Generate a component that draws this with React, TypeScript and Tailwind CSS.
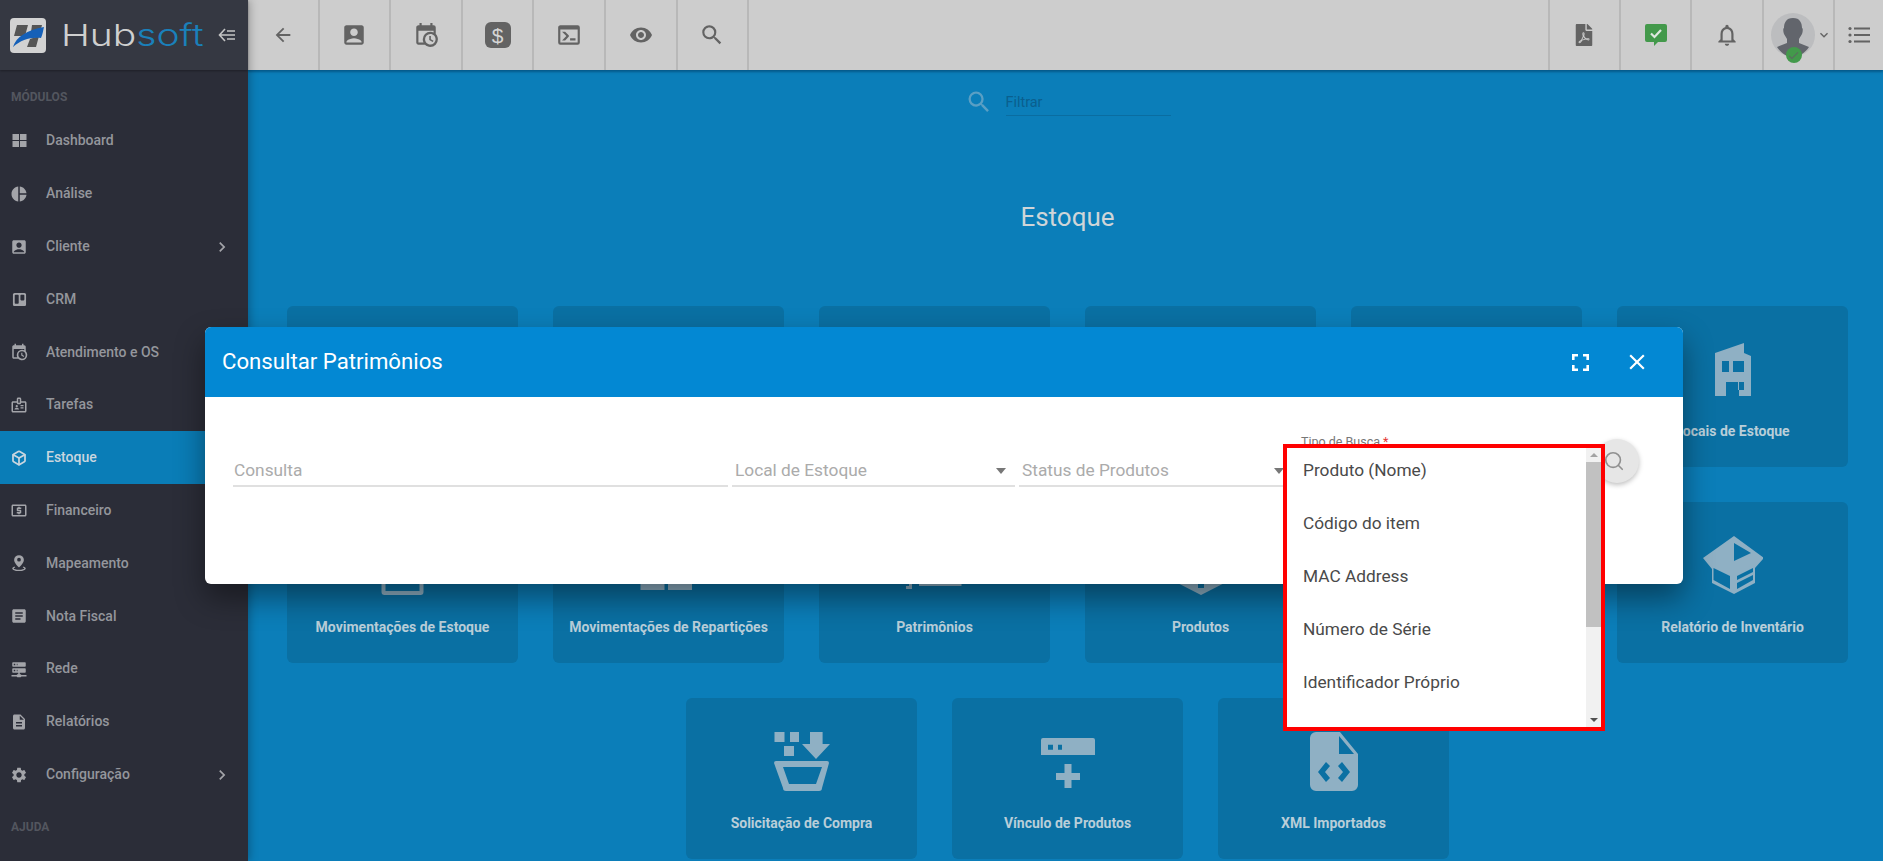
import React from "react";
import { Box, Search } from "lucide-react";
import {
  MdAccountBox, MdPieChart, MdOutlineBadge, MdLocalAtm, MdArticle, MdDescription,
  MdSettings, MdVisibility, MdSearch, MdNotificationsNone, MdArrowBack, MdChevronRight,
  MdKeyboardArrowDown, MdClose, MdCheck,
} from "react-icons/md";
import { FaFilePdf, FaTrello } from "react-icons/fa";

const CAL = "M15,13H16.5V15.82L18.94,17.23L18.19,18.53L15,16.69V13M19,8H5V19H9.67C9.24,18.09 9,17.07 9,16A7,7 0 0,1 16,9C17.07,9 18.09,9.24 19,9.67V8M5,21C3.89,21 3,20.1 3,19V5C3,3.89 3.89,3 5,3H6V1H8V3H16V1H18V3H19A2,2 0 0,1 21,5V11.1C22.24,12.36 23,14.09 23,16A7,7 0 0,1 16,23C14.09,23 12.36,22.24 11.1,21H5M16,11.15A4.85,4.85 0 0,0 11.15,16C11.15,18.68 13.32,20.85 16,20.85A4.85,4.85 0 0,0 20.85,16C20.85,13.32 18.68,11.15 16,11.15Z";
const SERVER = "M13,19H14A1,1 0 0,1 15,20H22V22H15A1,1 0 0,1 14,23H10A1,1 0 0,1 9,22H2V20H9A1,1 0 0,1 10,19H11V17H4A1,1 0 0,1 3,16V12A1,1 0 0,1 4,11H20A1,1 0 0,1 21,12V16A1,1 0 0,1 20,17H13V19M4,3H20A1,1 0 0,1 21,4V8A1,1 0 0,1 20,9H4A1,1 0 0,1 3,8V4A1,1 0 0,1 4,3M9,7H10V5H9V7M9,15H10V13H9V15M5,5V7H7V5H5M5,13V15H7V13H5Z";
const CONSOLE = "M20,19V7H4V19H20M20,3A2,2 0 0,1 22,5V19A2,2 0 0,1 20,21H4A2,2 0 0,1 2,19V5C2,3.89 2.9,3 4,3H20M13,17V15H18V17H13M9.58,13L5.57,9H8.4L11.7,12.3C12.09,12.69 12.09,13.33 11.7,13.72L8.42,17H5.59L9.58,13Z";
const PIN = "M12 1.500a6.500 6.500 0 0 0-6.500 6.500C5.500 12.500 12 18 12 18s6.500-5.500 6.500-10A6.500 6.500 0 0 0 12 1.500zm0 3.500a2.500 2.500 0 1 1 0 5 2.500 2.500 0 0 1 0-5zM6 16.500c-2 .7-3 1.700-3 2.700C3 21 7 22.800 12 22.800S21 21 21 19.200c0-1-1-2-3-2.700l-1 1.500c1.300.4 2 .9 2 1.200 0 .6-3 1.700-7 1.700s-7-1.100-7-1.700c0-.3.7-.8 2-1.200z";

const P = ({ d, size, className }: { d: string; size: number; className?: string }) => (
  <svg width={size} height={size} viewBox="0 0 24 24" fill="currentColor" className={className}><path d={d} /></svg>
);

const Tiles = () => (
  <svg width="15" height="15" viewBox="0 0 15 15" fill="currentColor">
    <rect x="0.5" y="1" width="6.5" height="6" /><rect x="8" y="1" width="6.5" height="6" />
    <rect x="0.5" y="8" width="6.5" height="6" /><rect x="8" y="8" width="6.5" height="6" />
  </svg>
);

const sideItems: { label: string; icon: React.ReactNode; arrow?: boolean; active?: boolean }[] = [
  { label: "Dashboard", icon: <Tiles /> },
  { label: "Análise", icon: <MdPieChart size={18} /> },
  { label: "Cliente", icon: <MdAccountBox size={18} />, arrow: true },
  { label: "CRM", icon: <FaTrello size={15} /> },
  { label: "Atendimento e OS", icon: <P d={CAL} size={18} /> },
  { label: "Tarefas", icon: <MdOutlineBadge size={18} /> },
  { label: "Estoque", icon: <Box size={16} strokeWidth={2.6} />, active: true },
  { label: "Financeiro", icon: <MdLocalAtm size={19} /> },
  { label: "Mapeamento", icon: <P d={PIN} size={18} /> },
  { label: "Nota Fiscal", icon: <MdArticle size={18} /> },
  { label: "Rede", icon: <P d={SERVER} size={18} /> },
  { label: "Relatórios", icon: <MdDescription size={18} /> },
  { label: "Configuração", icon: <MdSettings size={18} />, arrow: true },
];

const Sidebar = () => (
  <aside className="relative z-20 flex h-full w-[248px] shrink-0 flex-col bg-[#2b2d38] shadow-[2px_0_8px_rgba(0,0,0,0.25)]">
    <div className="flex h-[70px] shrink-0 items-center bg-[#353842] pl-[10px] shadow-[0_1px_2px_rgba(0,0,0,0.3)]">
      <svg width="36" height="35" viewBox="0 0 36 35" className="shrink-0">
        <rect width="36" height="35" rx="4" fill="#d2d2d2" />
        <path d="M7 7h11l-3 11H4zM22 7h10l-1 4-10 3zM20 21l9-3-3 11h-9z" fill="#555" />
        <path d="M3 29C6 19 17 12 34 9c-1 4-1.500 8-3 11-11-1-20 2-28 9z" fill="#1560b8" />
      </svg>
      <div className="ml-[15px] w-[147px] origin-left scale-x-[1.3] whitespace-nowrap text-[30px] font-light leading-none text-[#cfcfcf] [font-family:Inter,sans-serif]">
        Hub<span className="text-[#1a80ba]">soft</span>
      </div>
      <svg width="18" height="14" viewBox="0 0 18 14" fill="none" stroke="#c4c4c4" strokeWidth="1.6" className="ml-[10px] shrink-0">
        <path d="M7 1 1.5 7 7 13M2 7h15M9 3h8M9 11h8" />
      </svg>
    </div>
    <div className="flex h-[44.6px] shrink-0 items-end pb-[11px] pl-[11px] text-[12px] font-bold leading-[14px] text-[#53565f]">MÓDULOS</div>
    {sideItems.map((it) => (
      <div key={it.label} className={`flex h-[52.8px] shrink-0 items-center pl-[10px] text-[14px] font-medium ${it.active ? "bg-[#0a7db7] text-[#c9d6df]" : "text-[#94969c]"}`}>
        <span className={`flex w-[18px] justify-center ${it.active ? "text-[#c9d6df]" : "text-[#a3a4a9]"}`}>{it.icon}</span>
        <span className="ml-[18px] flex-1">{it.label}</span>
        {it.arrow && <MdChevronRight size={20} className="mr-[16px] text-[#a3a4a9]" />}
      </div>
    ))}
    <div className="flex h-[53px] shrink-0 items-center pl-[11px] text-[12px] font-bold text-[#53565f]">AJUDA</div>
  </aside>
);

const TopCell = ({ children }: { children: React.ReactNode }) => (
  <div className="flex h-full w-[71.6px] shrink-0 items-center justify-center border-r-2 border-[#b8b8b8] text-[#636363]">{children}</div>
);
const TopCellR = ({ children }: { children: React.ReactNode }) => (
  <div className="flex h-full w-[71.3px] shrink-0 items-center justify-center border-l-2 border-[#b8b8b8] text-[#636363]">{children}</div>
);

const TopBar = () => (
  <header className="relative z-10 flex h-[70px] shrink-0 items-stretch bg-[#cdcdcd] shadow-[0_2px_2px_rgba(0,60,100,0.55)]">
    <TopCell><MdArrowBack size={22} /></TopCell>
    <TopCell><MdAccountBox size={26} /></TopCell>
    <TopCell><P d={CAL} size={26} /></TopCell>
    <TopCell>
      <div className="flex h-[26px] w-[26px] items-center justify-center rounded-[6px] bg-[#636363] text-[21px] font-light leading-none text-[#d5d5d5] [font-family:'Liberation_Sans',sans-serif]">$</div>
    </TopCell>
    <TopCell><P d={CONSOLE} size={26} /></TopCell>
    <TopCell><MdVisibility size={24} /></TopCell>
    <TopCell><MdSearch size={26} /></TopCell>
    <div className="flex-1" />
    <TopCellR><FaFilePdf size={22} /></TopCellR>
    <TopCellR>
      <svg width="22" height="22" viewBox="0 0 22 22">
        <path d="M2 0h18a2 2 0 0 1 2 2v14a2 2 0 0 1-2 2h-7l-4 4v-4H2a2 2 0 0 1-2-2V2a2 2 0 0 1 2-2z" fill="#43994b" />
        <path d="M6 9.5 9.5 13 16 6" fill="none" stroke="#dfe8df" strokeWidth="2.2" />
      </svg>
    </TopCellR>
    <TopCellR><MdNotificationsNone size={26} /></TopCellR>
    <div className="flex h-full w-[71.3px] shrink-0 items-center border-l-2 border-[#b8b8b8] pl-[7px]">
      <div className="relative h-[44px] w-[44px] shrink-0">
        <svg width="44" height="44" viewBox="0 0 44 44">
          <circle cx="22" cy="22" r="22" fill="#bcbdbf" />
          <path d="M22 5c7 0 9 5 9 10 1 0 1 3 0 6-1 2-2 3-3 5v4l10 4c-4 6-10 10-16 10S10 40 6 34l10-4v-4c-1-2-2-3-3-5-1-3-1-6 0-6 0-5 2-10 9-10z" fill="#62656c" />
        </svg>
        <span className="absolute -bottom-[6px] left-[15px] flex h-[16px] w-[16px] items-center justify-center rounded-full bg-[#43994b] text-[#5c6a60]"><MdCheck size={13} /></span>
      </div>
      <MdKeyboardArrowDown size={16} className="ml-[1px] text-[#636363]" />
    </div>
    <div className="flex h-full w-[50px] shrink-0 items-center justify-center border-l-2 border-[#b8b8b8]">
      <svg width="22" height="18" viewBox="0 0 22 18" fill="#636363">
        <circle cx="2" cy="2.5" r="1.6" /><rect x="6" y="1.5" width="16" height="2" />
        <circle cx="2" cy="9" r="1.6" /><rect x="6" y="8" width="16" height="2" />
        <circle cx="2" cy="15.5" r="1.6" /><rect x="6" y="14.5" width="16" height="2" />
      </svg>
    </div>
  </header>
);

const IC = "#8fb0c4";
const I = ({ children }: { children: React.ReactNode }) => (
  <svg width="60" height="60" viewBox="0 0 60 60" fill={IC} fillRule="evenodd">{children}</svg>
);

const Building = () => (
  <I><path d="M12 13 41 3v10l7 3v40H36V42H23v14H12zM19 21v11h7V21zM30 21v11h11V21zM35 42h6v8h-6z" /></I>
);
const Pack = () => (
  <I><path d="M31 0 61 22 52 32V47L31 58 9 47V33L0 22ZM10.500 32 27 40V53L10.500 44ZM34 40 50 32V36L34 44ZM34 47 50 39V44L34 53ZM31 7V25L48 17Z" /></I>
);
const Move = () => (
  <I><path d="M8.500 30h42v26a3 3 0 0 1-3 3h-36a3 3 0 0 1-3-3zM12.500 30v25h34V30z" /></I>
);
const Rep = () => (
  <I><path d="M1.500 38h24v16h-24zM29 38h24v16H29z" /></I>
);
const Pat = () => (
  <I><path d="M14 40h42.500v10H14zM4 40h3v13H1v-3h3z" /></I>
);
const Prod = () => (
  <I><path d="M8.500 40h43v8L30 59 8.500 48zM27 48h6v4h-6z" /></I>
);
const Basket = () => (
  <I>
    <path d="M2.500 0h10v10h-10zM18 0h9v10h-9zM12 14h10v10H12zM38 0h12.600v12H58L44 27 30 12h8z" />
    <path d="M4 29h51a2 2 0 0 1 2 2L50 56a3 3 0 0 1-3 3H14a3 3 0 0 1-3-3L2 31a2 2 0 0 1 2-2zM11 35l6 17h27l6-17z" />
  </I>
);
const Link = () => (
  <I><path d="M5 6h50a2 2 0 0 1 2 2v15H3V8a2 2 0 0 1 2-2zM10 12.700v5h5v-5zM20 12.700v5h4v-5zM26.500 32h7v9H42v7h-8.500v8h-7v-8H18v-7h8.500z" /></I>
);
const Xml = () => (
  <I><path d="M12 0h24l18 22v31a6 6 0 0 1-6 6H12a6 6 0 0 1-6-6V6a6 6 0 0 1 6-6zM35 4v18h15zM22 30l-8 10 8 10 4-4-5-6 5-6zM38 30l-4 4 5 6-5 6 4 4 8-10z" /></I>
);

const Card = ({ icon, label }: { icon?: React.ReactNode; label?: string }) => (
  <div className="flex h-[161px] w-[231px] shrink-0 flex-col items-center rounded-[6px] bg-[#0a70a3] pt-[34px]">
    <div className="h-[60px]">{icon}</div>
    {label && <div className="mt-[23px] whitespace-nowrap text-[14px] font-bold leading-[17px] text-[#b9ced9]">{label}</div>}
  </div>
);

const Main = () => (
  <main className="flex min-h-0 flex-1 flex-col items-center overflow-hidden bg-[#0b7eb9] pl-1">
    <div className="mt-[17px] flex h-[29px] items-end">
      <MdSearch size={28} className="text-[#5a9fc4]" />
      <div className="ml-[13px] w-[165px] border-b border-[#0a6da1] pb-[2px] text-[14.4px] leading-[20px] text-[#0a5f8e]">Filtrar</div>
    </div>
    <h1 className="mt-[86px] text-[26px] font-normal leading-[30px] text-[#cfd5d8]">Estoque</h1>
    <div className="mt-[74px] flex w-[1561px] flex-wrap justify-center gap-[35px]">
      <Card /><Card /><Card /><Card /><Card />
      <Card icon={<Building />} label="Locais de Estoque" />
      <Card icon={<Move />} label="Movimentações de Estoque" />
      <Card icon={<Rep />} label="Movimentações de Repartições" />
      <Card icon={<Pat />} label="Patrimônios" />
      <Card icon={<Prod />} label="Produtos" />
      <Card />
      <Card icon={<Pack />} label="Relatório de Inventário" />
      <Card icon={<Basket />} label="Solicitação de Compra" />
      <Card icon={<Link />} label="Vínculo de Produtos" />
      <Card icon={<Xml />} label="XML Importados" />
    </div>
  </main>
);

const Field = ({ label, w, arrow, cls }: { label: string; w: string; arrow?: boolean; cls: string }) => (
  <div className={`flex h-[48px] shrink-0 items-end ${w}`}>
    <div className={`flex h-[33px] w-full items-center border-b-2 border-[#e0e0e0] pt-[3px] text-[17.3px] text-[#ababab] ${cls}`}>
      <span className="flex-1">{label}</span>
      {arrow && <span className="h-0 w-0 border-x-[5px] border-t-[6px] border-x-transparent border-t-[#777]" />}
    </div>
  </div>
);

const Modal = () => (
  <div className="absolute left-[205px] top-[327px] z-30 h-[257px] w-[1478px] rounded-[6px] bg-white shadow-[0_14px_30px_rgba(0,0,0,0.42)]">
    <div className="flex h-[70px] items-center rounded-t-[6px] bg-[#0388d3] pl-[17px] text-white">
      <div className="flex-1 pb-[1px] text-[22.2px] font-normal">Consultar Patrimônios</div>
      <svg width="17" height="17" viewBox="0 0 17 17" fill="none" stroke="#fff" strokeWidth="2.6" className="mr-[35px]">
        <path d="M1.300 6V1.300H6M11 1.300h4.700V6M15.700 11v4.700H11M6 15.700H1.300V11" />
      </svg>
      <MdClose size={26} className="mr-[33px]" />
    </div>
    <div className="flex items-start gap-[4px] pl-[28px] pt-[42px]">
      <Field label="Consulta" w="w-[495px]" cls="pl-[1px] pr-[9px]" />
      <Field label="Local de Estoque" w="w-[283px]" arrow cls="pl-[3px] pr-[9px]" />
      <Field label="Status de Produtos" w="w-[283px]" arrow cls="pl-[3px] pr-[18px]" />
      <div className="flex h-[48px] w-[291px] shrink-0 flex-col">
        <div className="-ml-[5px] -mt-[3px] text-[12.5px] leading-[12px] text-[#777]">Tipo de Busca <span className="text-[#e53935]">*</span></div>
      </div>
      <div className="-ml-[6px] flex h-[44px] w-[44px] shrink-0 items-center justify-center rounded-full bg-[#e6e6e6] pr-[6px] text-[#909090] shadow-[0_2px_5px_rgba(0,0,0,0.25)]">
        <Search size={22} strokeWidth={1.8} />
      </div>
    </div>
    <div className="absolute left-[1078px] top-[117px] flex h-[287px] w-[322px] overflow-hidden border-4 border-[#ff0000] bg-white">
      <div className="-mt-[3px] flex-1 pl-[16px] text-[17.3px] text-[#4a4a4a]">
        {["Produto (Nome)", "Código do item", "MAC Address", "Número de Série", "Identificador Próprio"].map((t) => (
          <div key={t} className="flex h-[52.8px] items-center">{t}</div>
        ))}
      </div>
      <div className="flex w-[15px] shrink-0 flex-col items-center bg-[#f1f1f1]">
        <div className="flex h-[14px] items-center justify-center">
          <span className="h-0 w-0 border-x-[4px] border-b-[4px] border-x-transparent border-b-[#a3a3a3]" />
        </div>
        <div className="h-[165px] w-full bg-[#c1c1c1]" />
        <div className="flex-1" />
        <div className="flex h-[14px] items-center justify-center">
          <span className="h-0 w-0 border-x-[4px] border-t-[4px] border-x-transparent border-t-[#505050]" />
        </div>
      </div>
    </div>
  </div>
);

export default function App() {
  return (
    <div className="relative flex h-[861px] w-[1883px] overflow-hidden [font-family:Roboto,sans-serif]">
      <Sidebar />
      <div className="flex min-w-0 flex-1 flex-col">
        <TopBar />
        <Main />
      </div>
      <Modal />
    </div>
  );
}
